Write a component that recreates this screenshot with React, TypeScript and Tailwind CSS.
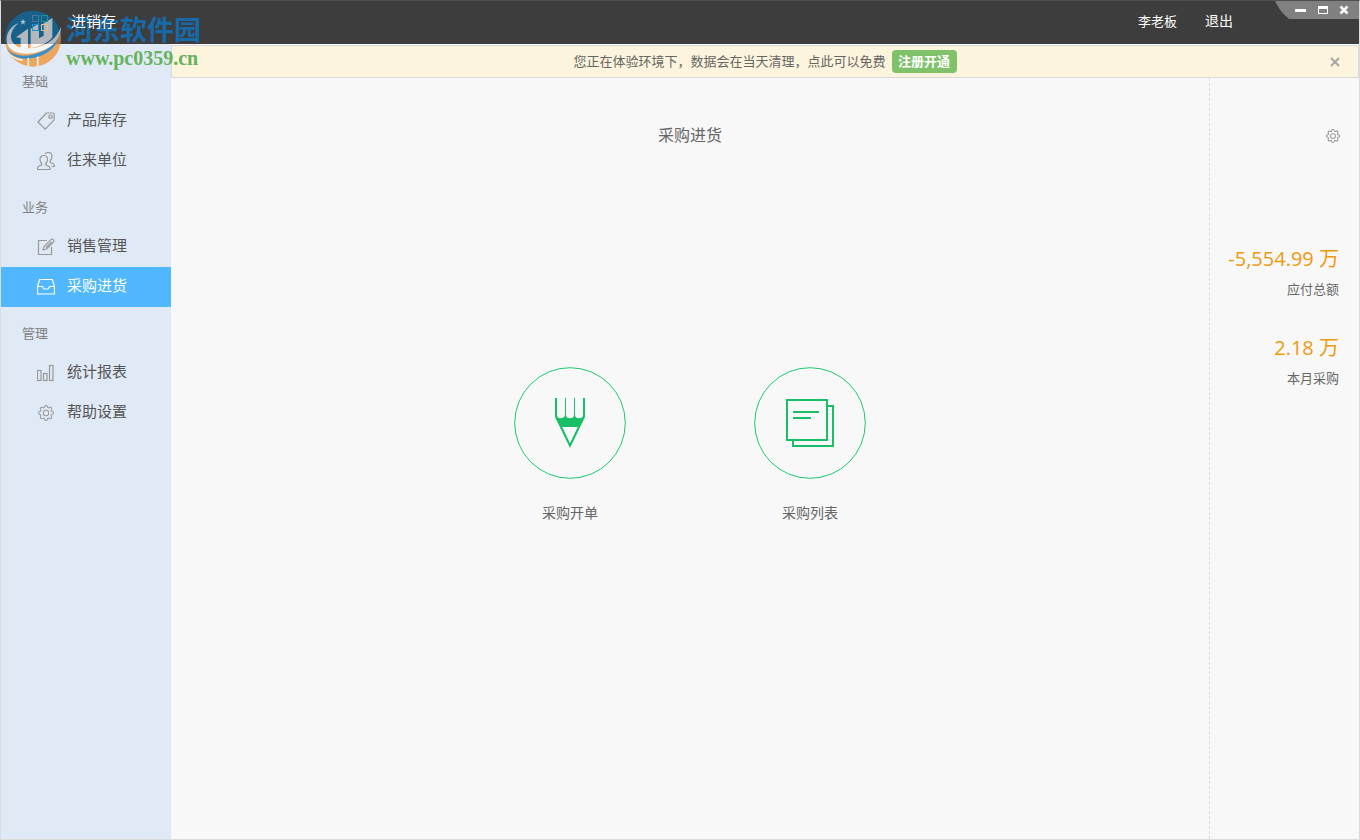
import React from 'react';
import { BsGear } from 'react-icons/bs';

interface MenuItem {
  label: string;
  icon: React.ReactNode;
  active?: boolean;
}

interface MenuGroup {
  title: string;
  items: MenuItem[];
}

interface IconProps {
  children: React.ReactNode;
}

const MenuIcon: React.FC<IconProps> = ({ children }) => (
  <svg width="18" height="18" viewBox="0 0 18 18" fill="none" stroke="currentColor" strokeWidth="1.2" aria-hidden="true">
    {children}
  </svg>
);

const TagIcon = () => (
  <MenuIcon>
    <path d="M9.500 1h6.600a1 1 0 0 1 1 1v5.800L8.200 17.200 1 10z" strokeLinejoin="round" />
    <circle cx="13.500" cy="4.700" r="1.700" />
  </MenuIcon>
);

const PeopleIcon = () => (
  <MenuIcon>
    <path d="M.5 17.500c0-3.200 1-3.300 4.200-4.500V11.500C3.600 10.500 3 9.300 3 7.500c0-2.500 1.500-4 3.700-4s3.800 1.500 3.800 4c0 1.800-.6 3-1.700 4V13c3.200 1.200 4.200 1.300 4.200 4.500z" />
    <path d="M8.200 1.800C9 .9 10 .5 11.300.5c2.200 0 3.700 1.600 3.700 4 0 1.800-.6 3-1.700 4V10.500c3.200 1.200 4.200 1.300 4.200 4h-3" />
  </MenuIcon>
);

const EditIcon = () => (
  <MenuIcon>
    <path d="M10 2.500H1.500v14h13V9" />
    <path d="M7 8.700 14 1.700c1.600-1.600 4 .6 2.400 2.300l-7 7L6 12z" strokeLinejoin="round" />
    <path d="M9 9.500l5.500-5.500" />
  </MenuIcon>
);

const InboxIcon = () => (
  <MenuIcon>
    <path d="M.5 8.500 2.700 1.500h12.600l2.200 7v7.500H.5z" strokeLinejoin="round" />
    <path d="M.5 8.500h5c.5 0 .5 2.500 1.500 2.500h4c1 0 1-2.500 1.500-2.500h5" />
  </MenuIcon>
);

const ChartIcon = () => (
  <MenuIcon>
    <rect x=".5" y="6.500" width="3.500" height="10" />
    <rect x="6.500" y="9.500" width="3.500" height="7" />
    <rect x="12.500" y="1.500" width="3.500" height="15" />
  </MenuIcon>
);

const groups: MenuGroup[] = [
  {
    title: '基础',
    items: [
      { label: '产品库存', icon: <TagIcon /> },
      { label: '往来单位', icon: <PeopleIcon /> },
    ],
  },
  {
    title: '业务',
    items: [
      { label: '销售管理', icon: <EditIcon /> },
      { label: '采购进货', icon: <InboxIcon />, active: true },
    ],
  },
  {
    title: '管理',
    items: [
      { label: '统计报表', icon: <ChartIcon /> },
      { label: '帮助设置', icon: <BsGear size={16} /> },
    ],
  },
];

const totals = [
  { value: '-5,554.99', label: '应付总额' },
  { value: '2.18', label: '本月采购' },
];

const PencilCircle = () => (
  <svg width="112" height="112" viewBox="0 0 112 112" fill="none" aria-hidden="true">
    <circle cx="56" cy="56" r="55.300" stroke="#1fc871" />
    <path
      d="M41 31h2v17c0 2 1.500 3.300 3.500 3.300S51 50 51 48V31h1v17c0 2 1.500 3.300 4 3.300s4-1.300 4-3.300V31h1v17c0 2 1.500 3.300 4 3.300S69 50 69 48V31h2v19L56 81 41 50z M48.200 60 56 76.200 63.800 60z"
      fill="#18bf66"
      fillRule="evenodd"
    />
  </svg>
);

const ListCircle = () => (
  <svg width="112" height="112" viewBox="0 0 112 112" fill="none" aria-hidden="true">
    <circle cx="56" cy="56" r="55.300" stroke="#1fc871" />
    <g stroke="#18bf66" strokeWidth="2">
      <rect x="33" y="33" width="40" height="40" />
      <path d="M74 39h5v40H39v-5M39 45h26M39 51h18" />
    </g>
  </svg>
);

const AppMark = () => (
  <svg className="relative z-10" width="16" height="16" viewBox="0 0 16 16" fill="none" aria-hidden="true">
    <rect x=".5" y=".5" width="6" height="6" stroke="#4a7896" />
    <rect x="9.500" y=".5" width="6" height="6" stroke="#1d9196" />
    <rect x=".5" y="9.500" width="6" height="6" stroke="#1b92d0" />
    <rect x="9.500" y="9.500" width="6" height="6" stroke="#d9c08c" />
  </svg>
);

const SiteLogo = () => (
  <svg width="64" height="66" viewBox="0 0 192 198" aria-hidden="true">
    <defs>
      <clipPath id="disc">
        <circle cx="93" cy="98" r="84" />
      </clipPath>
      <clipPath id="dark">
        <path d="M0 0h192v114H0z" />
      </clipPath>
      <clipPath id="light">
        <path d="M0 114h192v84H0z" />
      </clipPath>
      <g id="towers">
        <path d="M42 94 78 68V126H56V96zM86 126V68l25-16v45l14-8V57l-12 3 38-24v58c-12 16-36 28-65 32z" />
        <path d="M14 104C12 82 26 61 49 51 33 66 26 80 27 94c2 22 22 33 49 33 44 0 84-20 101-64 0 48-46 77-99 80-36 2-62-13-64-39z" />
      </g>
    </defs>
    <g clipPath="url(#disc)">
      <path d="M0 0h192v114H0z" fill="#17608c" />
      <path d="M0 114h192v84H0z" fill="#eea65e" />
      <path d="M134 114C156 102 170 86 178 66v48z" fill="#b9783f" />
      <path d="M6 104c6 38 42 52 86 42 38-8 68-30 80-58-8 42-48 66-92 70C42 161 12 142 6 104z" fill="#3b8fca" />
      <path d="M79 156v30M107 152v32" stroke="#f7f3ee" strokeWidth="5" />
      <path d="M14 132c10 20 26 30 48 33v-5C40 157 24 148 14 132z" fill="#f3f7fb" />
    </g>
    <use href="#towers" fill="#b4b8bd" clipPath="url(#dark)" />
    <use href="#towers" fill="#f3f7fb" clipPath="url(#light)" />
    <path d="M63 38l2.500 7h7l-6 4 2.500 7-6-4-6 4 2.500-7-6-4h7z" fill="#a9c3d3" />
  </svg>
);

export default function App() {
  return (
    <div className="relative flex min-h-screen flex-col border border-[#dcdcdc] border-t-[#4f4f4f] bg-[#f8f8f8] font-['Open_Sans','Noto_Sans_CJK_SC',sans-serif] text-[#666]">
      <header className="flex h-[43px] justify-between bg-[#3d3d3d] text-white">
        <div className="flex items-center gap-[23px] pl-[31px]">
          <AppMark />
          <h1 className="relative z-10 pb-1 text-[15px] leading-5">进销存</h1>
        </div>
        <div className="flex">
          <nav className="flex items-center gap-7 pr-[42px] pb-1">
            <a href="#" className="text-[13px] leading-5">李老板</a>
            <a href="#" className="text-sm leading-5">退出</a>
          </nav>
          <div className="relative flex h-[18px] w-[84px] items-center">
            <svg className="absolute inset-0" width="84" height="18" viewBox="0 0 84 18" aria-hidden="true">
              <path d="M0 0h84v18H14C8 13 4 8 0 0z" fill="#808080" />
            </svg>
            <div className="relative flex h-full w-full items-center justify-between pr-2.5 pl-5">
              <button aria-label="最小化">
                <svg width="11" height="10" viewBox="0 0 11 10"><path d="M0 4h11v3H0z" fill="#fff" /></svg>
              </button>
              <button aria-label="最大化">
                <svg width="10" height="10" viewBox="0 0 10 10"><path d="M0 1h10v8H0zM1 4v4h8V4z" fill="#fff" fillRule="evenodd" /></svg>
              </button>
              <button aria-label="关闭">
                <svg width="10" height="10" viewBox="0 0 10 10"><path d="M1.500 1.500l7 7M8.500 1.500l-7 7" stroke="#fff" strokeWidth="2.600" /></svg>
              </button>
            </div>
          </div>
        </div>
      </header>

      <div className="flex flex-1">
        <aside className="w-[170px] shrink-0 bg-[#e0eaf6] pt-[11px]">
          {groups.map((group) => (
            <section key={group.title}>
              <h2 className="flex h-[46px] items-center pt-1.5 pl-[21px] text-[13px] leading-5 text-[#808080]">{group.title}</h2>
              {group.items.map((item) => (
                <a
                  key={item.label}
                  href="#"
                  className={
                    item.active
                      ? 'flex h-10 items-center gap-3 bg-[#51b8ff] pl-9 text-white'
                      : 'flex h-10 items-center gap-3 pl-9 text-[#555]'
                  }
                >
                  <span className={item.active ? 'flex w-[18px] justify-center text-white' : 'flex w-[18px] justify-center text-[#999]'}>
                    {item.icon}
                  </span>
                  <span className="pb-1 text-[15px] leading-5">{item.label}</span>
                </a>
              ))}
            </section>
          ))}
        </aside>

        <div className="flex flex-1 flex-col">
          <div className="mt-px flex h-[33px] items-center border border-[#d9d9d9] bg-[#fcf4dc] pr-[18px]">
            <p className="flex flex-1 items-center justify-center gap-1.5 pl-7 text-[13px] leading-5">
              <span className="pb-0.5">您正在体验环境下，数据会在当天清理，点此可以免费</span>
              <button className="h-[23px] w-[65px] rounded bg-[#80c269] pb-0.5 font-bold leading-5 text-white">注册开通</button>
            </p>
            <button aria-label="关闭提示">
              <svg width="10" height="10" viewBox="0 0 10 10"><path d="M1 1l8 8M9 1L1 9" stroke="#a5a5a5" strokeWidth="2" /></svg>
            </button>
          </div>

          <div className="flex flex-1">
            <main className="flex flex-1 flex-col items-center pt-[45px]">
              <h2 className="text-base leading-6">采购进货</h2>
              <div className="flex pt-[220px]">
                <button className="flex w-60 flex-col items-center gap-6 text-sm leading-5">
                  <PencilCircle />
                  采购开单
                </button>
                <button className="flex w-60 flex-col items-center gap-6 text-sm leading-5">
                  <ListCircle />
                  采购列表
                </button>
              </div>
            </main>

            <aside className="flex w-[150px] shrink-0 flex-col items-end border-l border-dashed border-[#dcdcdc] pt-[51px] pr-[19px]">
              <button aria-label="设置" className="text-[#8c8c8c]">
                <BsGear size={14} />
              </button>
              <dl className="flex flex-col gap-[37px] pt-[104px] pr-px text-right whitespace-nowrap">
                {totals.map((total) => (
                  <div key={total.label} className="flex flex-col-reverse gap-2">
                    <dt className="text-[13px] leading-5">{total.label}</dt>
                    <dd className="text-xl leading-6 text-[#ee9a0f]">{total.value} 万</dd>
                  </div>
                ))}
              </dl>
            </aside>
          </div>
        </div>
      </div>

      <div className="pointer-events-none absolute top-[5px] left-px flex">
        <SiteLogo />
        <div className="pt-2 whitespace-nowrap">
          <div className="text-[27px] leading-8 font-bold text-[#1769a8]">河东软件园</div>
          <div className="font-['Liberation_Serif',serif] text-xl leading-6 font-bold text-[#67b35d]">www.pc0359.cn</div>
        </div>
      </div>
    </div>
  );
}
